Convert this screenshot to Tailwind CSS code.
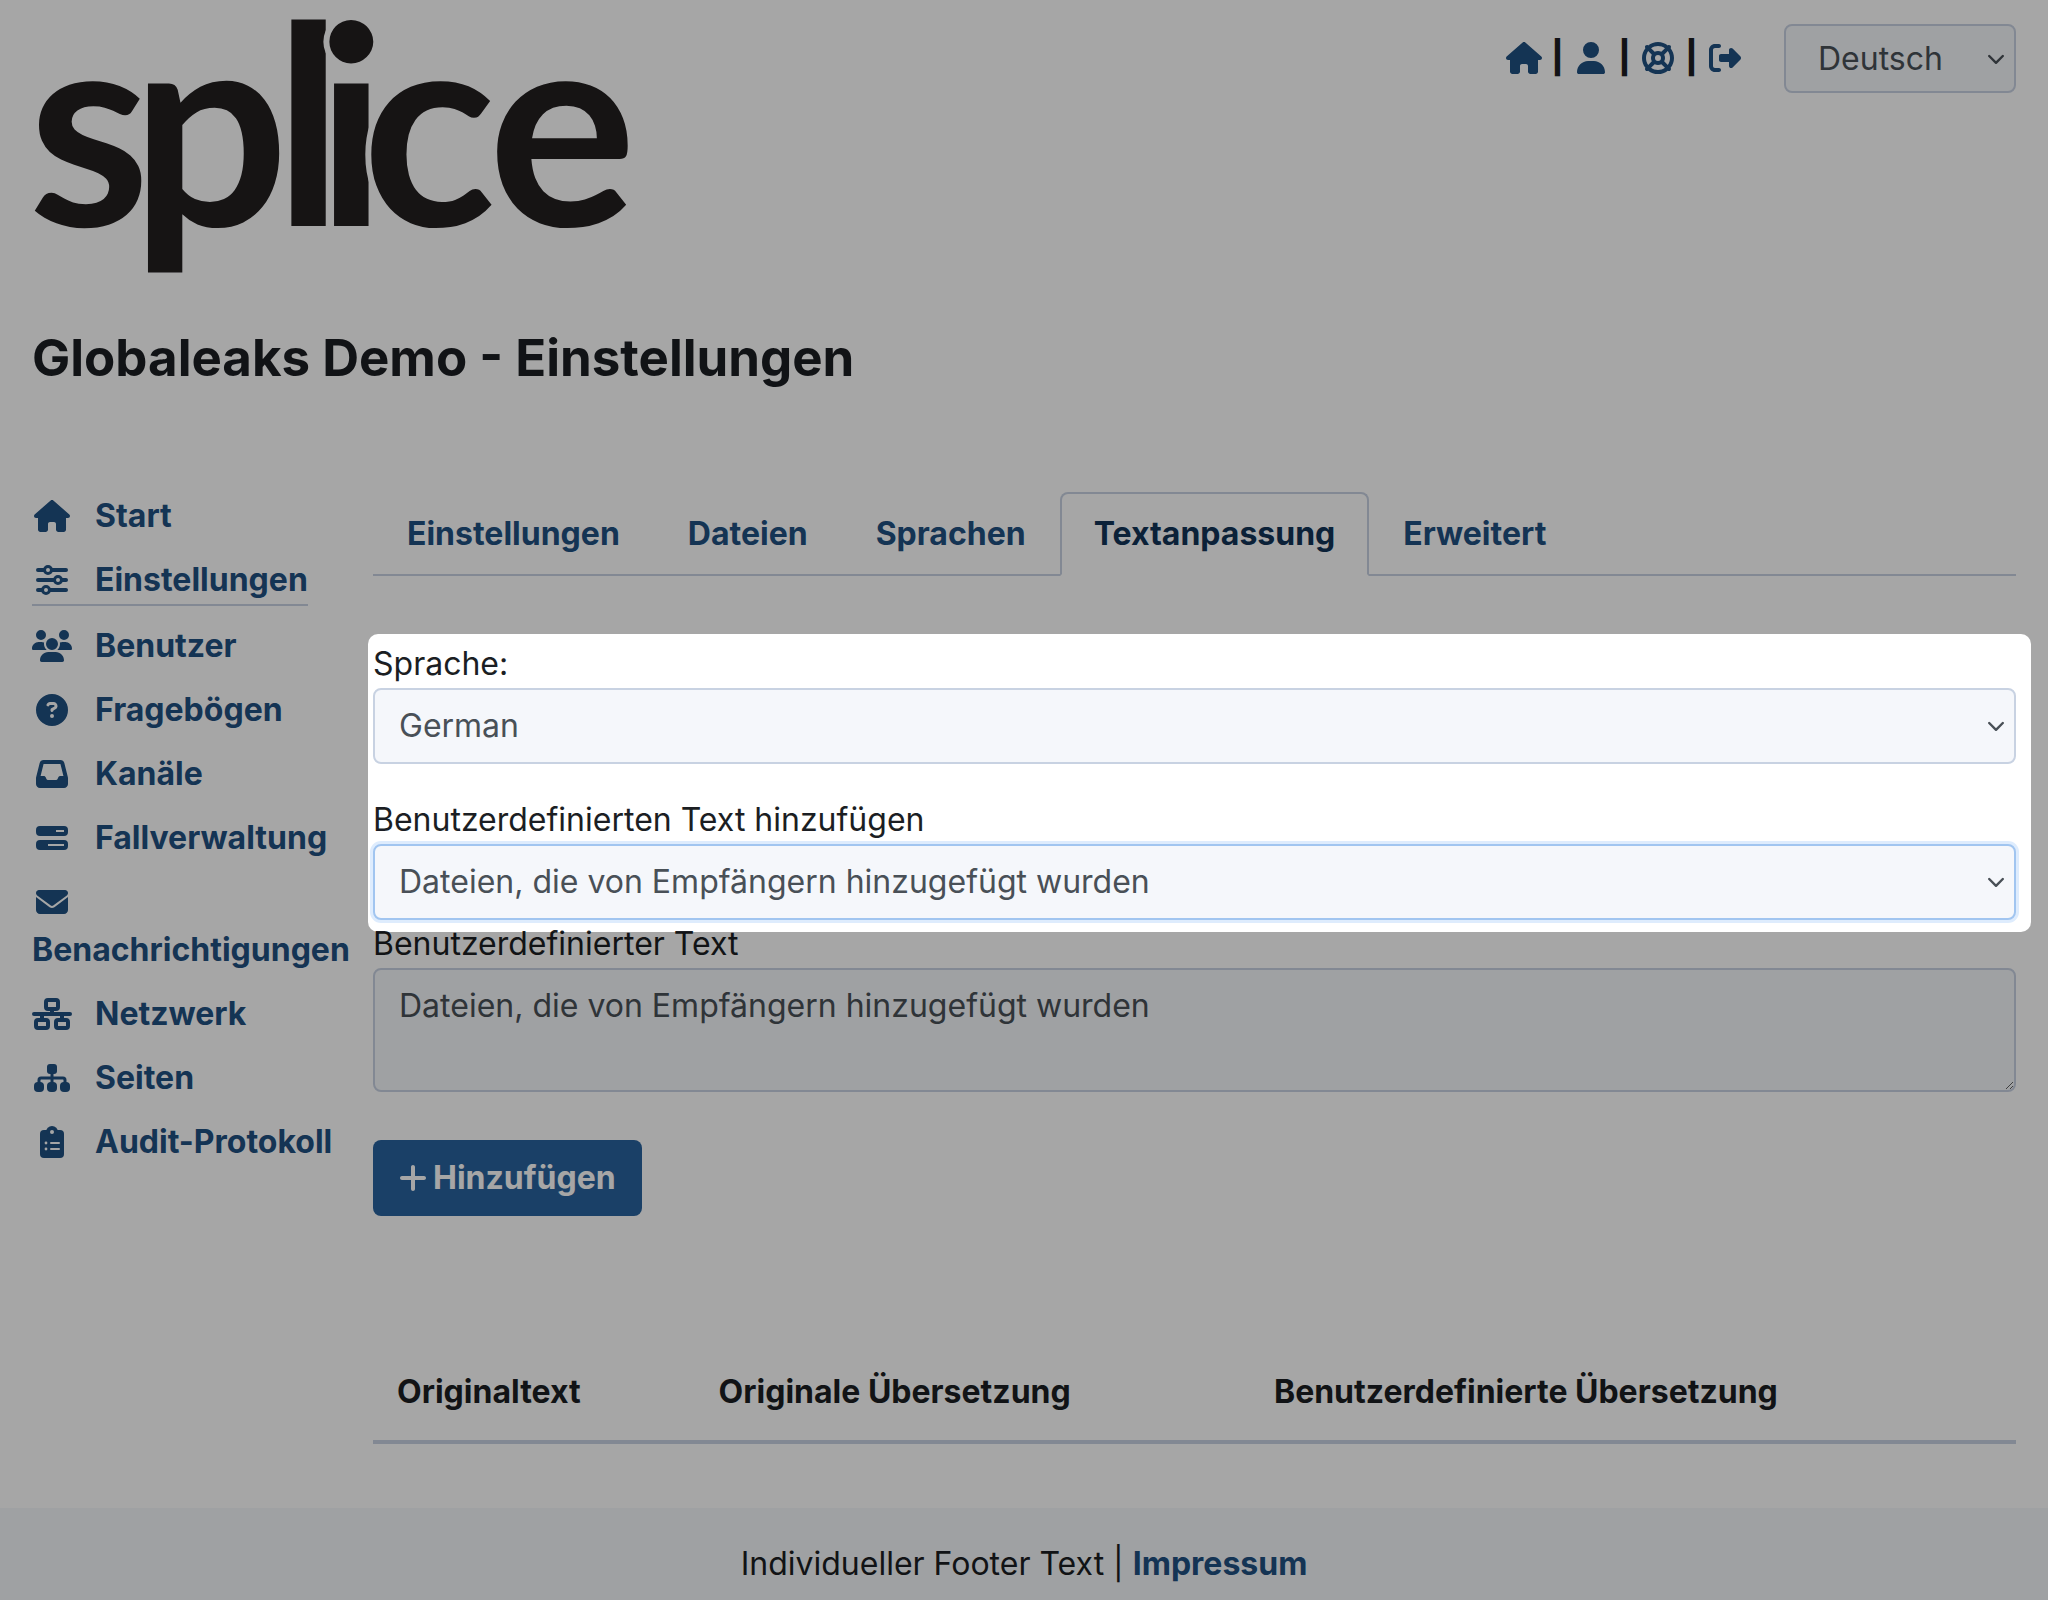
<!DOCTYPE html>
<html lang="de">
<head>
<meta charset="utf-8">
<meta name="viewport" content="width=device-width, initial-scale=1">
<title>Globaleaks Demo - Einstellungen</title>
<script src="https://cdn.jsdelivr.net/npm/@tailwindcss/browser@4"></script>
</head>
<body class="flex min-h-screen flex-col overflow-x-hidden bg-white font-['Inter',sans-serif] text-[32px] leading-[48px] text-[#1b1e23]">

<header class="px-8 pt-6">
  <div class="flex items-start justify-between">
    <a href="#" aria-label="splice" class="block">
      <svg width="600" height="264" viewBox="32 24 600 264" class="overflow-visible font-['Lato',sans-serif] text-[278px] font-bold" fill="#231f20" stroke="#fff" stroke-width="12" paint-order="stroke">
        <text x="28 131 274 316 362 488" y="226">splice</text>
      </svg>
    </a>
    <div class="flex items-start gap-[39px]">
      <nav aria-label="Konto" class="flex h-[68px] items-center text-[#1f5081]">
        <a href="#" aria-label="Start" class="flex w-10 justify-center"><svg class="h-8 w-9" viewBox="0 0 576 512" fill="currentColor"><path d="M575.8 255.5c0 18-15 32.1-32 32.1l-32 0 .7 160.2c0 2.7-.2 5.4-.5 8.1l0 16.2c0 22.1-17.9 40-40 40l-16 0c-1.1 0-2.2 0-3.3-.1c-1.4 .1-2.8 .1-4.2 .1L416 512l-24 0c-22.1 0-40-17.9-40-40l0-24 0-64c0-17.7-14.3-32-32-32l-64 0c-17.7 0-32 14.3-32 32l0 64 0 24c0 22.1-17.9 40-40 40l-24 0-31.9 0c-1.5 0-3-.1-4.5-.2c-1.2 .1-2.4 .2-3.6 .2l-16 0c-22.1 0-40-17.9-40-40l0-112c0-.9 0-1.9 .1-2.8l0-69.7-32 0c-18 0-32-14-32-32.1c0-9 3-17 10-24L266.4 8c7-7 15-8 22-8s15 2 21 7L564.8 231.5c8 7 12 15 11 24z"/></svg></a>
        <span class="w-[27px] text-center font-extrabold text-[#1b1e23]">|</span>
        <a href="#" aria-label="Benutzerkonto" class="flex w-10 justify-center"><svg class="h-8 w-7" viewBox="0 0 448 512" fill="currentColor"><path d="M224 256A128 128 0 1 0 224 0a128 128 0 1 0 0 256zm-45.7 48C79.8 304 0 383.8 0 482.3C0 498.7 13.3 512 29.7 512l388.6 0c16.4 0 29.7-13.3 29.7-29.7C448 383.8 368.2 304 269.7 304l-91.4 0z"/></svg></a>
        <span class="w-[27px] text-center font-extrabold text-[#1b1e23]">|</span>
        <a href="#" aria-label="Hilfe" class="flex w-10 justify-center"><svg class="size-8" viewBox="0 0 512 512" fill="currentColor"><path d="M367.2 412.5C335.9 434.9 297.5 448 256 448s-79.9-13.1-111.2-35.5l58-58c15.8 8.6 34 13.5 53.3 13.5s37.4-4.9 53.3-13.5l57.8 58zm90.7 .8c33.8-43.4 54-98 54-157.3s-20.2-113.9-54-157.3c9-12.5 7.9-30.1-3.4-41.3S425.8 45 413.3 54C369.9 20.2 315.3 0 256 0S142.1 20.2 98.7 54c-12.5-9-30.1-7.9-41.3 3.4S45 86.2 54 98.7C20.2 142.1 0 196.7 0 256s20.2 113.9 54 157.3c-9 12.5-7.9 30.1 3.4 41.3S86.2 467 98.7 458c43.4 33.8 98 54 157.3 54s113.9-20.2 157.3-54c12.5 9 30.1 7.9 41.3-3.4s12.4-28.8 3.4-41.3zm-45.5-46.1l-57.8-57.8c8.6-15.8 13.5-34 13.5-53.3s-4.9-37.4-13.5-53.3l57.8-57.8C434.9 176.1 448 214.5 448 256s-13.1 79.9-35.5 111.2zM367.2 99.5l-57.8 57.8c-15.8-8.6-34-13.5-53.3-13.5s-37.4 4.9-53.3 13.5l-57.8-57.8C176.1 77.1 214.5 64 256 64s79.9 13.1 111.2 35.5zM157.3 309.3l-57.8 57.8C77.1 335.9 64 297.5 64 256s13.1-79.9 35.5-111.2l57.8 57.8c-8.6 15.8-13.5 34-13.5 53.3s4.9 37.4 13.5 53.3zM208 256a48 48 0 1 1 96 0 48 48 0 1 1 -96 0z"/></svg></a>
        <span class="w-[27px] text-center font-extrabold text-[#1b1e23]">|</span>
        <a href="#" aria-label="Abmelden" class="flex w-10 justify-center"><svg class="size-8" viewBox="0 0 512 512" fill="currentColor"><path d="M377.9 105.9L500.7 228.7c7.2 7.2 11.3 17.1 11.3 27.3s-4.1 20.1-11.3 27.3L377.9 406.1c-6.4 6.4-15 9.9-24 9.9c-18.7 0-33.9-15.2-33.9-33.9l0-62.1-128 0c-17.7 0-32-14.3-32-32l0-64c0-17.7 14.3-32 32-32l128 0 0-62.1c0-18.7 15.2-33.9 33.9-33.9c9 0 17.6 3.6 24 9.9zM160 96L96 96c-17.7 0-32 14.3-32 32l0 256c0 17.7 14.3 32 32 32l64 0c17.7 0 32 14.3 32 32s-14.3 32-32 32l-64 0c-53 0-96-43-96-96L0 128C0 75 43 32 96 32l64 0c17.7 0 32 14.3 32 32s-14.3 32-32 32z"/></svg></a>
      </nav>
      <div class="relative w-[232px]">
        <select aria-label="Sprache der Oberfläche" class="block h-[69px] w-full appearance-none rounded-lg border-2 border-[#c8d2e2] bg-[#f5f7fb] pl-8 text-[#495057]"><option>Deutsch</option></select>
        <svg class="pointer-events-none absolute top-1/2 right-3 h-3 w-4 -translate-y-1/2" viewBox="0 0 16 12" fill="none" stroke="#495057" stroke-width="2.4" stroke-linecap="round" stroke-linejoin="round"><path d="M1.2 3L8 9.800l6.800-6.800"/></svg>
      </div>
    </div>
  </div>
  <h1 class="mt-10 text-[51px] leading-[60px] font-bold">Globaleaks Demo - Einstellungen</h1>
</header>

<main class="mt-[104px] flex gap-6 px-8">
  <nav aria-label="Verwaltung" class="w-[317px] shrink-0 font-bold text-[#1f5081]">
    <ul class="flex flex-col gap-4">
      <li><a href="#" class="flex w-fit flex-wrap gap-x-[23px]">
        <span class="flex h-12 w-10 items-center justify-center"><svg class="h-8 w-9" viewBox="0 0 576 512" fill="currentColor"><path d="M575.8 255.5c0 18-15 32.1-32 32.1l-32 0 .7 160.2c0 2.7-.2 5.4-.5 8.1l0 16.2c0 22.1-17.9 40-40 40l-16 0c-1.1 0-2.2 0-3.3-.1c-1.4 .1-2.8 .1-4.2 .1L416 512l-24 0c-22.1 0-40-17.9-40-40l0-24 0-64c0-17.7-14.3-32-32-32l-64 0c-17.7 0-32 14.3-32 32l0 64 0 24c0 22.1-17.9 40-40 40l-24 0-31.9 0c-1.5 0-3-.1-4.5-.2c-1.2 .1-2.4 .2-3.6 .2l-16 0c-22.1 0-40-17.9-40-40l0-112c0-.9 0-1.9 .1-2.8l0-69.7-32 0c-18 0-32-14-32-32.1c0-9 3-17 10-24L266.4 8c7-7 15-8 22-8s15 2 21 7L564.8 231.5c8 7 12 15 11 24z"/></svg></span>
        <span>Start</span></a></li>
      <li><a href="#" aria-current="page" class="flex w-fit flex-wrap gap-x-[23px] border-b-2 border-[#c8d2e2]">
        <span class="flex h-12 w-10 items-center justify-center"><svg class="size-8" viewBox="0 0 32 32" stroke="currentColor" fill="#fff"><path stroke-width="4" stroke-linecap="round" d="M2 6h28M2 16h28M2 26h28"/><circle cx="12" cy="6" r="3.5" stroke-width="3"/><circle cx="22" cy="16" r="3.5" stroke-width="3"/><circle cx="10" cy="26" r="3.5" stroke-width="3"/></svg></span>
        <span>Einstellungen</span></a></li>
      <li><a href="#" class="flex w-fit flex-wrap gap-x-[23px]">
        <span class="flex h-12 w-10 items-center justify-center"><svg class="h-8 w-10" viewBox="0 0 640 512" fill="currentColor"><path d="M144 0a80 80 0 1 1 0 160A80 80 0 1 1 144 0zM512 0a80 80 0 1 1 0 160A80 80 0 1 1 512 0zM0 298.7C0 239.8 47.8 192 106.7 192l42.7 0c15.9 0 31 3.5 44.6 9.7c-1.3 7.2-1.9 14.7-1.9 22.3c0 38.2 16.8 72.5 43.3 96c-.2 0-.4 0-.7 0L21.3 320C9.6 320 0 310.4 0 298.7zM405.3 320c-.2 0-.4 0-.7 0c26.6-23.5 43.3-57.8 43.3-96c0-7.6-.7-15-1.9-22.3c13.6-6.3 28.7-9.7 44.6-9.7l42.7 0C592.2 192 640 239.8 640 298.7c0 11.8-9.6 21.3-21.3 21.3l-213.3 0zM224 224a96 96 0 1 1 192 0 96 96 0 1 1 -192 0zM128 485.3C128 411.7 187.7 352 261.3 352l117.3 0C452.3 352 512 411.7 512 485.3c0 14.7-11.9 26.7-26.7 26.7l-330.7 0c-14.7 0-26.7-11.9-26.7-26.7z"/></svg></span>
        <span>Benutzer</span></a></li>
      <li><a href="#" class="flex w-fit flex-wrap gap-x-[23px]">
        <span class="flex h-12 w-10 items-center justify-center"><svg class="size-8" viewBox="0 0 512 512" fill="currentColor"><path d="M256 512A256 256 0 1 0 256 0a256 256 0 1 0 0 512zM169.8 165.3c7.9-22.3 29.1-37.3 52.8-37.3l58.3 0c34.9 0 63.1 28.3 63.1 63.1c0 22.6-12.1 43.5-31.7 54.8L280 264.4c-.2 13-10.9 23.6-24 23.6c-13.3 0-24-10.7-24-24l0-13.5c0-8.6 4.6-16.5 12.1-20.8l44.3-25.4c4.7-2.7 7.6-7.7 7.6-13.1c0-8.4-6.8-15.1-15.1-15.1l-58.3 0c-3.4 0-6.4 2.1-7.5 5.3l-.4 1.2c-4.4 12.5-18.2 19-30.6 14.6s-19-18.2-14.6-30.6l.4-1.2zM224 352a32 32 0 1 1 64 0 32 32 0 1 1 -64 0z"/></svg></span>
        <span>Fragebögen</span></a></li>
      <li><a href="#" class="flex w-fit flex-wrap gap-x-[23px]">
        <span class="flex h-12 w-10 items-center justify-center"><svg class="size-8" viewBox="0 0 512 512" fill="currentColor"><path d="M121 32C91.6 32 66 52 58.9 80.5L1.9 308.4C.6 313.5 0 318.7 0 323.9L0 416c0 35.3 28.7 64 64 64l384 0c35.3 0 64-28.7 64-64l0-92.1c0-5.2-.6-10.4-1.9-15.5l-57-227.9C446 52 420.4 32 391 32L121 32zm0 64l270 0 48 192-51.2 0c-12.1 0-23.2 6.8-28.6 17.7l-14.3 28.6c-5.4 10.8-16.5 17.7-28.6 17.7l-120.4 0c-12.1 0-23.2-6.8-28.6-17.7l-14.3-28.6c-5.4-10.8-16.5-17.7-28.6-17.7L73 288 121 96z"/></svg></span>
        <span>Kanäle</span></a></li>
      <li><a href="#" class="flex w-fit flex-wrap gap-x-[23px]">
        <span class="flex h-12 w-10 items-center justify-center"><svg class="size-8" viewBox="0 0 32 32" fill="currentColor" fill-rule="evenodd"><path d="M4 4h24a4 4 0 0 1 4 4v2a4 4 0 0 1-4 4H4a4 4 0 0 1-4-4V8a4 4 0 0 1 4-4zM20 8v2h8V8zM4 18h24a4 4 0 0 1 4 4v2a4 4 0 0 1-4 4H4a4 4 0 0 1-4-4v-2a4 4 0 0 1 4-4zM12 22v2h16v-2z"/></svg></span>
        <span>Fallverwaltung</span></a></li>
      <li><a href="#" class="flex w-fit flex-wrap gap-x-[23px]">
        <span class="flex h-12 w-10 items-center justify-center"><svg class="size-8" viewBox="0 0 512 512" fill="currentColor"><path d="M48 64C21.5 64 0 85.5 0 112c0 15.1 7.1 29.3 19.2 38.4L236.8 313.6c11.4 8.5 27 8.5 38.4 0L492.8 150.4c12.1-9.1 19.2-23.3 19.2-38.4c0-26.5-21.5-48-48-48L48 64zM0 176L0 384c0 35.3 28.7 64 64 64l384 0c35.3 0 64-28.7 64-64l0-208L294.4 339.2c-22.8 17.1-54 17.1-76.8 0L0 176z"/></svg></span>
        <span>Benachrichtigungen</span></a></li>
      <li><a href="#" class="flex w-fit flex-wrap gap-x-[23px]">
        <span class="flex h-12 w-10 items-center justify-center"><svg class="h-8 w-10" viewBox="0 0 40 32" fill="none" stroke="currentColor" stroke-width="4"><rect x="14" y="2" width="12" height="9" rx="2"/><rect x="4" y="22" width="12" height="8" rx="2"/><rect x="24" y="22" width="12" height="8" rx="2"/><path stroke-linecap="round" d="M2 16h36"/><path d="M20 12v4M10 16v5M30 16v5"/></svg></span>
        <span>Netzwerk</span></a></li>
      <li><a href="#" class="flex w-fit flex-wrap gap-x-[23px]">
        <span class="flex h-12 w-10 items-center justify-center"><svg class="h-7 w-9" viewBox="0 0 36 28" fill="currentColor"><rect x="13" width="10" height="10" rx="3"/><rect y="18" width="10" height="10" rx="4"/><rect x="13" y="18" width="10" height="10" rx="4"/><rect x="26" y="18" width="10" height="10" rx="4"/><path fill="none" stroke="currentColor" stroke-width="3" d="M18 9v10M5 19v-3q0-2 2-2h22q2 0 2 2v3"/></svg></span>
        <span>Seiten</span></a></li>
      <li><a href="#" class="flex w-fit flex-wrap gap-x-[23px]">
        <span class="flex h-12 w-10 items-center justify-center"><svg class="h-8 w-6" viewBox="0 0 24 32" fill="currentColor"><rect y="4" width="24" height="28" rx="4"/><circle cx="12" cy="6" r="6"/><circle cx="12" cy="6" r="2" fill="#fff"/><g fill="#fff"><circle cx="6" cy="17" r="1.4"/><circle cx="6" cy="23" r="1.4"/><rect x="10" y="16" width="10" height="2" rx="1"/><rect x="10" y="22" width="10" height="2" rx="1"/></g></svg></span>
        <span>Audit-Protokoll</span></a></li>
    </ul>
  </nav>

  <div class="min-w-0 flex-1">
    <nav aria-label="Bereiche" class="border-b-2 border-[#c8d2e2] font-bold text-[#1f5081]">
      <ul class="-mb-0.5 flex">
        <li><a href="#" class="block border-2 border-transparent px-8 py-4">Einstellungen</a></li>
        <li><a href="#" class="block border-2 border-transparent px-8 py-4">Dateien</a></li>
        <li><a href="#" class="block border-2 border-transparent px-8 py-4">Sprachen</a></li>
        <li><a href="#" aria-current="page" class="block rounded-t-lg border-2 border-[#c8d2e2] border-b-white bg-white px-8 py-4 text-[#113356]">Textanpassung</a></li>
        <li><a href="#" class="block border-2 border-transparent px-8 py-4">Erweitert</a></li>
      </ul>
    </nav>

    <form class="mt-16">
      <div class="relative flex flex-col gap-8">
        <div>
          <label for="lang" class="block">Sprache:</label>
          <div class="relative">
            <select id="lang" class="block h-[76px] w-full appearance-none rounded-lg border-2 border-[#c8d2e2] bg-[#f5f7fb] px-6 text-[#495057]"><option>German</option></select>
            <svg class="pointer-events-none absolute top-1/2 right-3 h-3 w-4 -translate-y-1/2" viewBox="0 0 16 12" fill="none" stroke="#495057" stroke-width="2.4" stroke-linecap="round" stroke-linejoin="round"><path d="M1.2 3L8 9.800l6.800-6.800"/></svg>
          </div>
        </div>
        <div>
          <label for="original" class="block">Benutzerdefinierten Text hinzufügen</label>
          <div class="relative">
            <select id="original" class="block h-[76px] w-full appearance-none rounded-lg border-2 border-[#a1c5f0] bg-[#f5f7fb] px-6 text-[#495057] shadow-[0_0_0_3px_#deecfd]"><option>Dateien, die von Empfängern hinzugefügt wurden</option></select>
            <svg class="pointer-events-none absolute top-1/2 right-3 h-3 w-4 -translate-y-1/2" viewBox="0 0 16 12" fill="none" stroke="#495057" stroke-width="2.4" stroke-linecap="round" stroke-linejoin="round"><path d="M1.2 3L8 9.800l6.800-6.800"/></svg>
          </div>
        </div>
        <!-- spotlight: dims the page around these two fields -->
        <div class="pointer-events-none absolute -top-1.5 -right-[15px] -bottom-3 -left-[5px] z-10 rounded-[10px] shadow-[0_0_0_4000px_rgba(0,0,0,0.35)]"></div>
      </div>

      <label for="custom" class="block">Benutzerdefinierter Text</label>
      <textarea id="custom" rows="2" class="block h-[124px] w-full resize-y rounded-lg border-2 border-[#c8d2e2] bg-[#f5f7fb] px-6 py-3 text-[#495057]">Dateien, die von Empfängern hinzugefügt wurden</textarea>

      <button type="button" class="mt-12 flex h-[76px] items-center gap-1.5 rounded-lg bg-[#28639e] px-[26px] font-bold text-white"><svg class="h-8 w-7" viewBox="0 0 448 512" fill="currentColor"><path d="M256 80c0-17.7-14.3-32-32-32s-32 14.3-32 32l0 144L48 224c-17.7 0-32 14.3-32 32s14.3 32 32 32l144 0 0 144c0 17.7 14.3 32 32 32s32-14.3 32-32l0-144 144 0c17.7 0 32-14.3 32-32s-14.3-32-32-32l-144 0 0-144z"/></svg>Hinzufügen</button>
    </form>

    <table class="mt-32 w-full text-left">
      <thead>
        <tr class="border-b-4 border-[#c8d2e2]">
          <th class="p-6 font-bold">Originaltext</th>
          <th class="p-6 font-bold">Originale Übersetzung</th>
          <th class="p-6 font-bold">Benutzerdefinierte Übersetzung</th>
        </tr>
      </thead>
    </table>
  </div>
</main>

<footer class="mt-16 flex-1 bg-[#f5f7fb] pt-8 text-center">
  Individueller Footer Text | <a href="#" class="font-bold text-[#1f5081]">Impressum</a>
</footer>
</body>
</html>
